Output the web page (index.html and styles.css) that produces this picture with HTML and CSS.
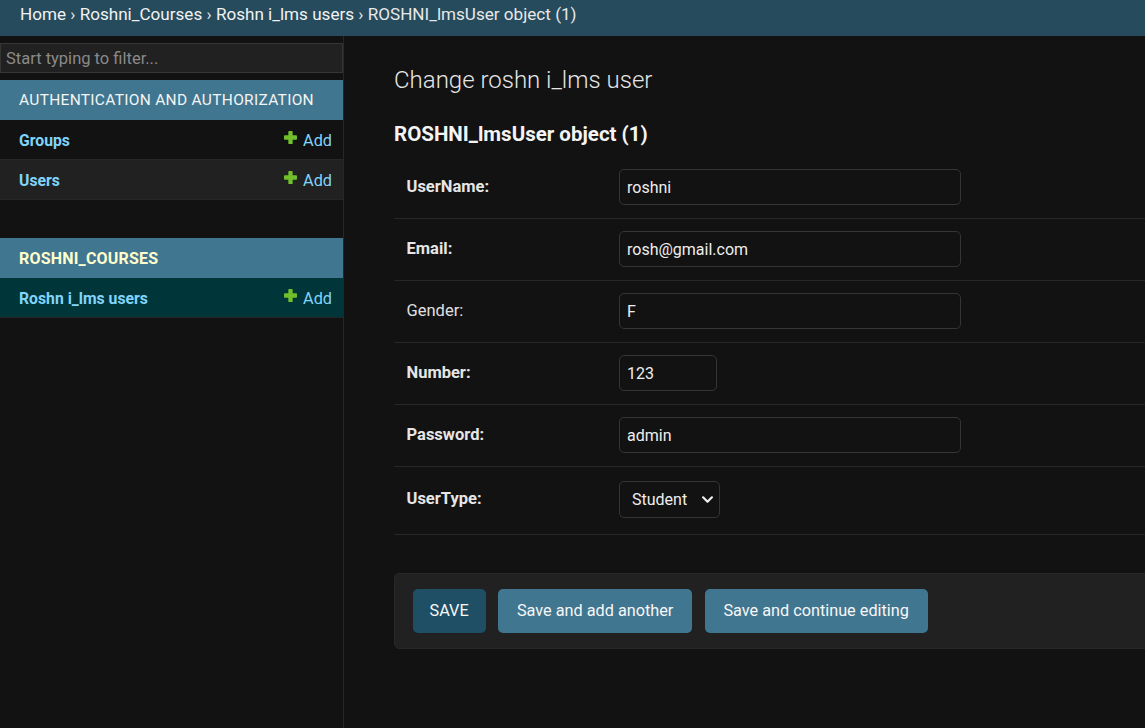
FILE: index.html
```html
<!DOCTYPE html>
<html lang="en">
<head>
<meta charset="utf-8">
<title>Change roshn i_lms user</title>
<link rel="stylesheet" href="styles.css">
</head>
<body>
<nav class="breadcrumbs">
  <a href="#">Home</a> › <a href="#">Roshni_Courses</a> › <a href="#">Roshn i_lms users</a> › ROSHNI_lmsUser object (1)
</nav>
<div class="layout">
  <aside class="sidebar">
    <input class="nav-filter" type="search" placeholder="Start typing to filter...">
    <section class="app">
      <div class="caption">Authentication and Authorization</div>
      <div class="model-row">
        <a class="model" href="#">Groups</a>
        <a class="addlink" href="#"><svg class="plus" viewBox="0 0 12 12"><rect x="4" y="0" width="4" height="12" rx="0.8"/><rect x="0" y="4" width="12" height="4" rx="0.8"/></svg>Add</a>
      </div>
      <div class="model-row alt">
        <a class="model" href="#">Users</a>
        <a class="addlink" href="#"><svg class="plus" viewBox="0 0 12 12"><rect x="4" y="0" width="4" height="12" rx="0.8"/><rect x="0" y="4" width="12" height="4" rx="0.8"/></svg>Add</a>
      </div>
    </section>
    <section class="app current-app">
      <div class="caption current">Roshni_Courses</div>
      <div class="model-row selected">
        <a class="model" href="#">Roshn i_lms users</a>
        <a class="addlink" href="#"><svg class="plus" viewBox="0 0 12 12"><rect x="4" y="0" width="4" height="12" rx="0.8"/><rect x="0" y="4" width="12" height="4" rx="0.8"/></svg>Add</a>
      </div>
    </section>
  </aside>
  <main class="content">
    <h1>Change roshn i_lms user</h1>
    <h2>ROSHNI_lmsUser object (1)</h2>
    <form>
      <fieldset class="aligned">
        <div class="form-row">
          <label class="required">UserName:</label>
          <input class="vText" type="text" value="roshni">
        </div>
        <div class="form-row">
          <label class="required">Email:</label>
          <input class="vText" type="text" value="rosh@gmail.com">
        </div>
        <div class="form-row">
          <label>Gender:</label>
          <input class="vText" type="text" value="F">
        </div>
        <div class="form-row">
          <label class="required">Number:</label>
          <input class="vNumber" type="text" value="123">
        </div>
        <div class="form-row">
          <label class="required">Password:</label>
          <input class="vText" type="text" value="admin">
        </div>
        <div class="form-row select-row">
          <label class="required">UserType:</label>
          <div class="select-wrap">
            <select class="vSelect">
              <option>Student</option>
              <option>Teacher</option>
            </select>
            <svg class="chevron" viewBox="0 0 10 6"><path d="M1 1 L5 5 L9 1"/></svg>
          </div>
        </div>
      </fieldset>
      <div class="submit-row">
        <button type="button" class="btn default">SAVE</button>
        <button type="button" class="btn">Save and add another</button>
        <button type="button" class="btn">Save and continue editing</button>
      </div>
    </form>
  </main>
</div>
</body>
</html>
```
FILE: styles.css
```css
* { box-sizing: border-box; }
html, body { height: 100%; }
body {
  margin: 0;
  background: #121212;
  color: #eeeeee;
  font-family: Roboto, "Liberation Sans", sans-serif;
  font-size: 17.5px;
  display: flex;
  flex-direction: column;
  overflow: hidden;
}
a { text-decoration: none; }

.breadcrumbs {
  height: 36px;
  flex: 0 0 36px;
  background: #264b5d;
  color: #e8e8e8;
  padding: 3px 20px 0;
  font-size: 17.1px;
  line-height: 22px;
  white-space: nowrap;
}
.breadcrumbs a { color: #f2f2f2; }

.layout {
  flex: 1;
  display: flex;
  min-height: 0;
}

.sidebar {
  flex: 0 0 344px;
  border-right: 1px solid #272727;
  background: #121212;
}
.nav-filter {
  display: block;
  width: 343px;
  height: 30px;
  margin: 7px 0 7px;
  padding: 0 5px;
  background: #212121;
  border: 1px solid #353535;
  color: #eee;
  font-family: inherit;
  font-size: 16.5px;
  outline: none;
}
.nav-filter::placeholder { color: #8a8a8a; }

.app { margin-bottom: 38px; }
.caption {
  height: 40px;
  padding: 0 19px;
  display: flex;
  align-items: center;
  background: #417690;
  color: #f4f4f4;
  font-size: 15.5px;
  letter-spacing: 0.3px;
  text-transform: uppercase;
  white-space: nowrap;
}
.caption.current {
  color: #ffffcc;
  font-weight: 700;
  letter-spacing: 0.2px;
  font-size: 16px;
}
.model-row {
  height: 40px;
  display: flex;
  align-items: center;
  justify-content: space-between;
  padding: 1px 11px 0 19px;
  border-bottom: 1px solid #272727;
  background: #121212;
}
.model-row.alt { background: #212121; }
.model-row.selected { background: #00363a; }
.model {
  color: #81d4fa;
  font-weight: 700;
  font-size: 15.75px;
}
.addlink {
  color: #81d4fa;
  font-size: 16.25px;
  display: flex;
  align-items: center;
  gap: 6px;
}
.plus {
  width: 13px;
  height: 13px;
  fill: #70bf2b;
  position: relative;
  top: -3px;
}

.content {
  flex: 1;
  min-width: 0;
  padding: 29px 0 0 50px;
  overflow: hidden;
}
h1 {
  margin: 0 0 25px;
  font-size: 24px;
  font-weight: 300;
  color: #e6e6e6;
  line-height: 1.3;
}
h2 {
  margin: 0 0 9px;
  font-size: 20.5px;
  font-weight: 700;
  color: #f4f4f4;
  line-height: 1.3;
}
fieldset {
  margin: 0 0 38px;
  padding: 0;
  border: 0;
  min-width: 0;
}
.form-row {
  display: flex;
  align-items: flex-start;
  padding: 12.5px 12.5px;
  border-bottom: 1px solid #272727;
}
.form-row.select-row { padding: 14px 12.5px 16px; }
.form-row label {
  flex: 0 0 212.5px;
  padding: 10px 12.5px 0 0;
  line-height: 1;
  font-size: 16.5px;
  color: #e0e0e0;
}
.form-row label.required { font-weight: 700; color: #e6e6e6; }

.vText, .vNumber, .vSelect {
  height: 36px;
  background: #121212;
  border: 1px solid #353535;
  border-radius: 5px;
  color: #eeeeee;
  font-family: inherit;
  font-size: 16px;
  padding: 0 7px;
  outline: none;
}
.vText { width: 342px; }
.vNumber { width: 98px; }
.select-wrap { position: relative; }
.vSelect {
  -webkit-appearance: none;
  appearance: none;
  width: 101px;
  height: 37px;
  padding: 0 12px;
}
.chevron {
  position: absolute;
  right: 7px;
  top: 15px;
  width: 11px;
  height: 7px;
  fill: none;
  stroke: #eeeeee;
  stroke-width: 2;
  stroke-linecap: round;
  stroke-linejoin: round;
  pointer-events: none;
}

.submit-row {
  display: flex;
  gap: 12.5px;
  margin-right: -20px;
  padding: 15px 17.5px;
  background: #212121;
  border: 1px solid #272727;
  border-radius: 5px;
}
.btn {
  height: 44px;
  padding: 0 18.75px;
  border: 0;
  border-radius: 5px;
  background: #417690;
  color: #f7f7f7;
  font-family: inherit;
  font-size: 16.25px;
  cursor: pointer;
}
.btn.default { background: #1f4f65; padding: 0 17px; }
```
